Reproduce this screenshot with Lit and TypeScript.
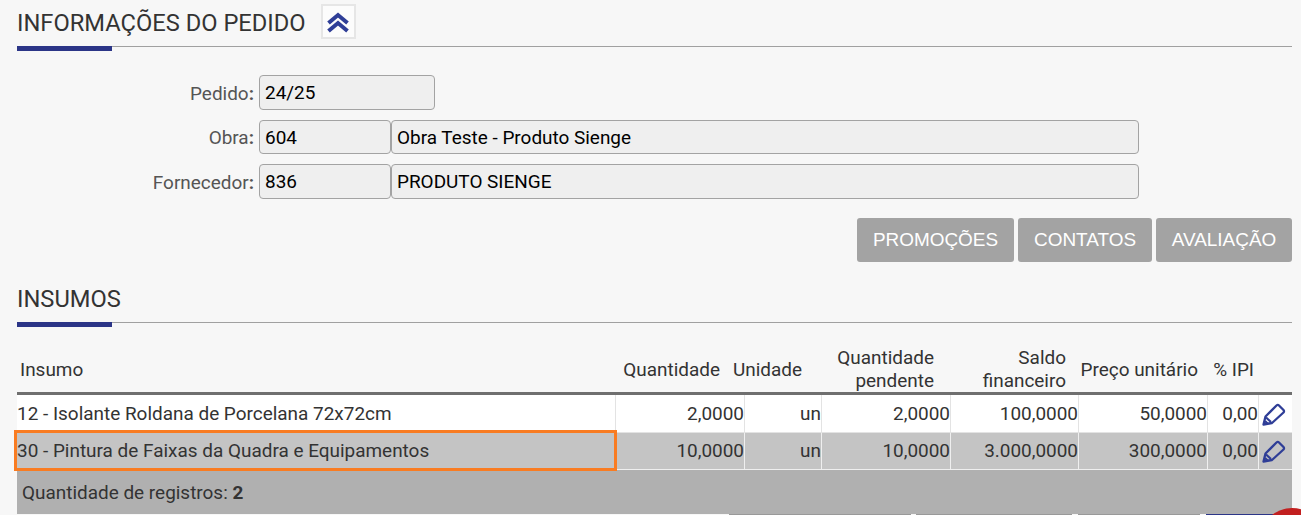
import { LitElement, html, css, svg } from "lit";
import { customElement } from "lit/decorators.js";

const pencil = html`<svg class="pencil" viewBox="0 0 24 24" width="24" height="24" fill="none" stroke="#2f3e97" stroke-width="2.3" stroke-linejoin="round">
  ${svg`<path d="M1.5 22.5 L3.5 14.5 L14.5 3.5 Q15.8 2.3 17 3.5 L21.5 8 Q22.5 9.2 21.5 10.5 L10 21 Z"/><path d="M4 15.5 L9 20 M3 19 L6 22" />`}
</svg>`;

const rows = [
  ["12 - Isolante Roldana de Porcelana 72x72cm", "2,0000", "un", "2,0000", "100,0000", "50,0000", "0,00"],
  ["30 - Pintura de Faixas da Quadra e Equipamentos", "10,0000", "un", "10,0000", "3.000,0000", "300,0000", "0,00"],
];

@customElement("app-root")
export class AppRoot extends LitElement {
  static styles = css`
    :host { display: block; width: 1301px; height: 515px; overflow: hidden; background: #f7f7f7; position: relative; font-family: Roboto, sans-serif; color: #333; }
    .section { padding: 0 9px 0 17px; }
    .title { display: flex; align-items: center; gap: 15px; height: 46px; border-bottom: 1px solid #a0a0a0; font-size: 23.7px; color: #333; }
    .title.second { height: 46px; margin-top: 14px; }
    .bar { width: 95px; height: 5px; background: #2b3587; margin-top: -1px; }
    .toggle { width: 35px; height: 35px; box-sizing: border-box; border: 2px solid #e6e6e6; background: #fcfcfc; display: flex; align-items: center; justify-content: center; margin-top: -3px; }
    .form { padding-top: 24px; display: grid; grid-template-columns: 242px 132px 748px; grid-template-rows: 35px 34px 35px; row-gap: 10px; }
    .label { grid-column: 1; font-size: 18.95px; color: #555; text-align: right; align-self: center; padding: 1px 5px 0 0; }
    .label b { font-weight: 700; color: #555; }
    .input { box-sizing: border-box; border: 1px solid #a3a3a3; border-radius: 4px; background: #efefef; color: #000; font-size: 18.95px; display: flex; align-items: center; padding-left: 5px; }
    .wide { width: 176px; grid-column: 2 / 4; }
    .actions { display: flex; justify-content: flex-end; gap: 4px; margin-top: 19px; }
    .btn { height: 44px; border-radius: 3px; background: #a3a3a3; color: #fff; font-family: "Liberation Sans", Arial, sans-serif; font-size: 18.95px; display: flex; align-items: center; justify-content: center; }
    .b1 { width: 157px; } .b2 { width: 134px; } .b3 { width: 136px; }
    .head { display: grid; grid-template-columns: 603px 100px 82px 132px 132px 132px 56px 38px; height: 47px; margin-top: 18px; border-bottom: 3px solid #6f6f6f; font-size: 18.95px; line-height: 23px; align-items: center; text-align: right; color: #333; }
    .head .one { padding-top: 1px; }
    .head .first { text-align: left; padding-left: 3px; }
    table { width: 1275px; table-layout: fixed; border-collapse: separate; border-spacing: 0; font-size: 18.95px; }
    td { padding: 0; text-align: right; white-space: nowrap; height: 38px; box-sizing: border-box; border-right: 1px solid #e3e3e3; border-bottom: 1px solid #e3e3e3; color: #333; }
    td.name { text-align: left; position: relative; }
    tr.a td { background: #fff; }
    tr.b td { background: #c4c4c4; border-color: #efefef; height: 37px; padding-bottom: 1px; }
    tr.b td.name::after { content: ""; position: absolute; left: -3px; right: -2px; top: -3px; bottom: -2px; border: 3px solid #f97c22; }
    td.icon { border-right: 0; text-align: left; }
    .pencil { display: block; margin-left: 3px; }
    tfoot td { background: #b0b0b0; height: 44px; padding-left: 5px; text-align: left; border: 0; }
    tfoot b { font-weight: 700; }
    .bottom { position: absolute; top: 514px; left: 0; width: 100%; height: 1px; }
    .bottom i { position: absolute; top: 0; height: 1px; background: #999; }
    .red { position: absolute; left: 1260px; top: 508px; width: 64px; height: 64px; border-radius: 50%; background: #c21f1f; }
  `;

  render() {
    return html`
      <div class="section">
        <div class="title"><span>INFORMAÇÕES DO PEDIDO</span>
          <span class="toggle"><svg width="24" height="22" viewBox="0 0 24 22" fill="none" stroke="#2f3e97" stroke-width="4"><path d="M2.5 12 L12 4 L21.5 12"/><path d="M2.5 20 L12 12 L21.5 20"/></svg></span>
        </div>
        <div class="bar"></div>
        <div class="form">
          <div class="label">Pedido<b>:</b></div><div class="input wide">24/25</div>
          <div class="label">Obra<b>:</b></div><div class="input">604</div><div class="input">Obra Teste - Produto Sienge</div>
          <div class="label">Fornecedor<b>:</b></div><div class="input">836</div><div class="input">PRODUTO SIENGE</div>
        </div>
        <div class="actions">
          <div class="btn b1">PROMOÇÕES</div><div class="btn b2">CONTATOS</div><div class="btn b3">AVALIAÇÃO</div>
        </div>
        <div class="title second"><span>INSUMOS</span></div>
        <div class="bar"></div>
        <div class="head">
          <div class="first one">Insumo</div><div class="one">Quantidade</div><div class="one">Unidade</div><div>Quantidade<br>pendente</div><div>Saldo<br>financeiro</div><div class="one">Preço unitário</div><div class="one">% IPI</div><div></div>
        </div>
        <table>
          <colgroup><col style="width:599px"><col style="width:129px"><col style="width:77px"><col style="width:129px"><col style="width:128px"><col style="width:129px"><col style="width:51px"><col style="width:33px"></colgroup>
          <tbody>
            ${rows.map((r, i) => html`<tr class=${i ? "b" : "a"}>
              <td class="name">${r[0]}</td>${r.slice(1).map((c) => html`<td>${c}</td>`)}<td class="icon">${pencil}</td>
            </tr>`)}
          </tbody>
          <tfoot><tr><td colspan="8">Quantidade de registros: <b>2</b></td></tr></tfoot>
        </table>
      </div>
      <div class="bottom"><i style="left:729px;width:182px"></i><i style="left:916px;width:156px"></i><i style="left:1078px;width:122px"></i><i style="left:1206px;width:95px;background:#2b3587"></i></div>
      <div class="red"></div>
    `;
  }
}
